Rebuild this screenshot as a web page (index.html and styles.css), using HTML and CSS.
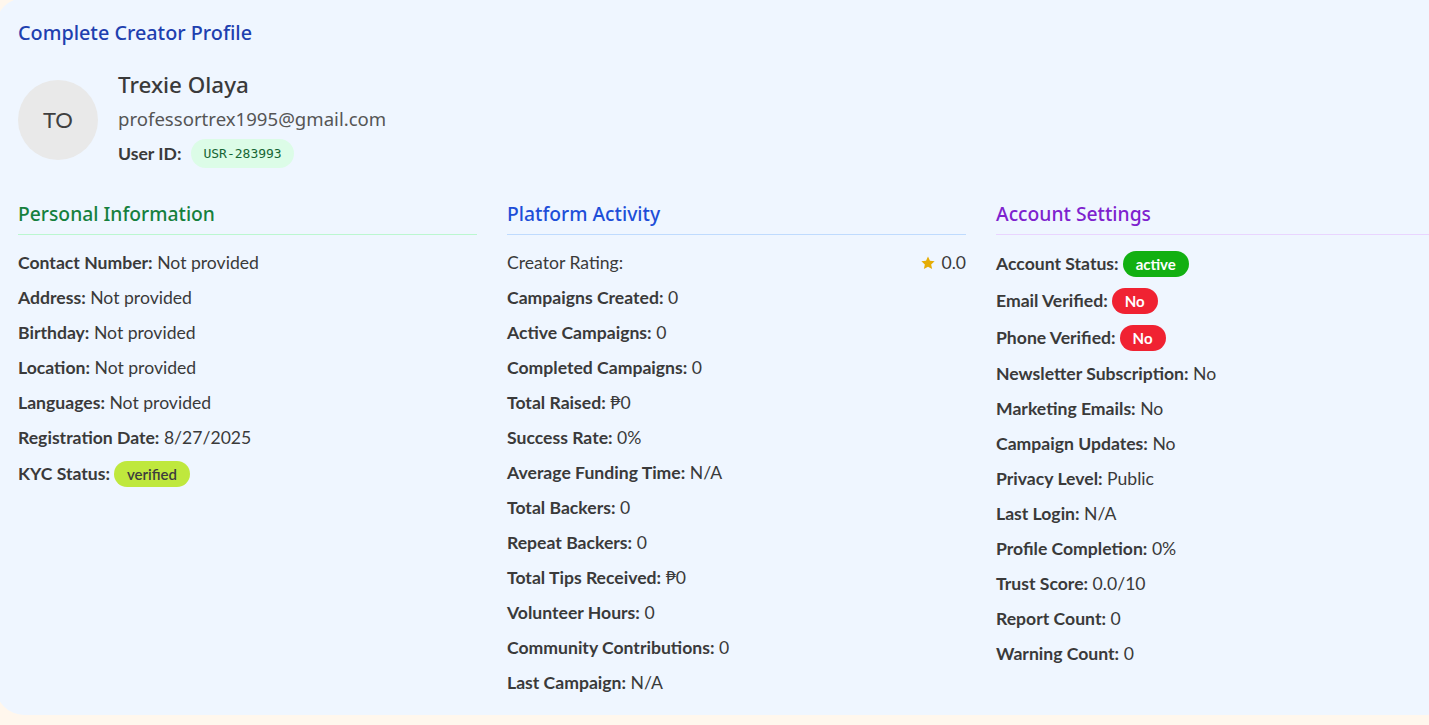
FILE: index.html
```html
<!DOCTYPE html>
<html lang="en">
<head>
<meta charset="utf-8">
<title>Complete Creator Profile</title>
<link rel="stylesheet" href="styles.css">
</head>
<body>
<div class="card">
  <h2 class="title">Complete Creator Profile</h2>
  <div class="profile">
    <div class="avatar">TO</div>
    <div class="info">
      <div class="name">Trexie Olaya</div>
      <div class="email">professortrex1995@gmail.com</div>
      <div class="userid"><span class="lbl">User ID:</span><span class="id-badge">USR-283993</span></div>
    </div>
  </div>
  <div class="columns">
    <section class="col">
      <h3 class="sec-title green">Personal Information</h3>
      <div class="rows">
        <div class="row"><b>Contact Number:</b>&nbsp;Not provided</div>
        <div class="row"><b>Address:</b>&nbsp;Not provided</div>
        <div class="row"><b>Birthday:</b>&nbsp;Not provided</div>
        <div class="row"><b>Location:</b>&nbsp;Not provided</div>
        <div class="row"><b>Languages:</b>&nbsp;Not provided</div>
        <div class="row"><b>Registration Date:</b>&nbsp;8/27/2025</div>
        <div class="row"><b>KYC Status:</b><span class="badge lime">verified</span></div>
      </div>
    </section>
    <section class="col">
      <h3 class="sec-title blue">Platform Activity</h3>
      <div class="rows">
        <div class="row between"><span>Creator Rating:</span><span class="rating"><svg class="star" viewBox="0 0 24 24" width="16" height="16"><path d="M12 2.2l2.95 6.4 7 .75-5.22 4.75 1.47 6.9L12 17.5 5.8 21l1.47-6.9L2.05 9.35l7-.75z" fill="#e5ad06"/></svg>0.0</span></div>
        <div class="row"><b>Campaigns Created:</b>&nbsp;0</div>
        <div class="row"><b>Active Campaigns:</b>&nbsp;0</div>
        <div class="row"><b>Completed Campaigns:</b>&nbsp;0</div>
        <div class="row"><b>Total Raised:</b>&nbsp;₱0</div>
        <div class="row"><b>Success Rate:</b>&nbsp;0%</div>
        <div class="row"><b>Average Funding Time:</b>&nbsp;N/A</div>
        <div class="row"><b>Total Backers:</b>&nbsp;0</div>
        <div class="row"><b>Repeat Backers:</b>&nbsp;0</div>
        <div class="row"><b>Total Tips Received:</b>&nbsp;₱0</div>
        <div class="row"><b>Volunteer Hours:</b>&nbsp;0</div>
        <div class="row"><b>Community Contributions:</b>&nbsp;0</div>
        <div class="row"><b>Last Campaign:</b>&nbsp;N/A</div>
      </div>
    </section>
    <section class="col">
      <h3 class="sec-title purple">Account Settings</h3>
      <div class="rows">
        <div class="row"><b>Account Status:</b><span class="badge green-b">active</span></div>
        <div class="row"><b>Email Verified:</b><span class="badge red">No</span></div>
        <div class="row"><b>Phone Verified:</b><span class="badge red">No</span></div>
        <div class="row"><b>Newsletter Subscription:</b>&nbsp;No</div>
        <div class="row"><b>Marketing Emails:</b>&nbsp;No</div>
        <div class="row"><b>Campaign Updates:</b>&nbsp;No</div>
        <div class="row"><b>Privacy Level:</b>&nbsp;Public</div>
        <div class="row"><b>Last Login:</b>&nbsp;N/A</div>
        <div class="row"><b>Profile Completion:</b>&nbsp;0%</div>
        <div class="row"><b>Trust Score:</b>&nbsp;0.0/10</div>
        <div class="row"><b>Report Count:</b>&nbsp;0</div>
        <div class="row"><b>Warning Count:</b>&nbsp;0</div>
      </div>
    </section>
  </div>
</div>
</body>
</html>
```

FILE: styles.css
```css
html, body {
  margin: 0;
  padding: 0;
  background: #fff7ed;
  overflow: hidden;
  height: 725px;
}
body {
  font-family: "Lato", "Liberation Sans", sans-serif;
  color: #3a3a3a;
}
.card {
  background: #eff6ff;
  margin: -2px 0 0 -4px;
  width: 1485px;
  box-sizing: border-box;
  padding: 21px 24px 20px 22px;
  border-radius: 28px;
}
.title {
  margin: 0;
  font-family: "Noto Sans", "Lato", sans-serif;
  font-weight: 500;
  font-size: 19.8px;
  line-height: 28px;
  color: #1e40af;
}
.profile {
  display: flex;
  align-items: center;
  gap: 20px;
  margin-top: 24px;
}
.avatar {
  width: 80px;
  height: 80px;
  border-radius: 50%;
  background: #e9e9e9;
  display: flex;
  align-items: center;
  justify-content: center;
  font-size: 22px;
  color: #3f3f3f;
  font-family: "Lato", sans-serif;
}
.info {
  display: flex;
  flex-direction: column;
  gap: 6px;
}
.name {
  font-family: "Noto Sans", "Lato", sans-serif;
  font-size: 22.4px;
  font-weight: 500;
  line-height: 28px;
  color: #3a3a3a;
}
.email {
  font-family: "Noto Sans", "Lato", sans-serif;
  font-size: 18.6px;
  line-height: 28px;
  color: #555;
}
.userid {
  display: flex;
  align-items: center;
  gap: 10px;
  height: 29px;
}
.lbl {
  font-weight: 700;
  font-size: 17.6px;
}
.id-badge {
  background: #dcfce7;
  color: #166534;
  font-family: "DejaVu Sans Mono", "Liberation Mono", monospace;
  font-size: 13px;
  padding: 0 12px;
  height: 29px;
  line-height: 29px;
  border-radius: 15px;
}
.columns {
  display: grid;
  grid-template-columns: 459px 459px 459px;
  column-gap: 30px;
  margin-top: 32px;
}
.sec-title {
  margin: 0;
  font-family: "Noto Sans", "Lato", sans-serif;
  font-weight: 500;
  font-size: 19.3px;
  line-height: 28px;
  padding-bottom: 6px;
  border-bottom: 1px solid;
}
.green { color: #15803d; border-color: #bbf7d0; }
.blue { color: #1d4ed8; border-color: #bfdbfe; }
.purple { color: #7e22ce; border-color: #e9d5ff; }
.rows {
  display: flex;
  flex-direction: column;
  gap: 11px;
  margin-top: 16px;
}
.row {
  display: flex;
  align-items: center;
  font-size: 17.6px;
  line-height: 24px;
  min-height: 24px;
  white-space: nowrap;
}
.row b {
  font-weight: 700;
}
.between {
  justify-content: space-between;
}
.rating {
  display: flex;
  align-items: center;
  gap: 5px;
}
.badge {
  display: inline-flex;
  align-items: center;
  height: 26px;
  padding: 0 13px;
  border-radius: 13px;
  font-size: 15px;
  font-weight: 700;
  margin-left: 4px;
}
.lime {
  background: #bfe83d;
  color: #3d3d3d;
  font-weight: 600;
}
.green-b { background: #12b012; color: #fff; }
.red { background: #f02232; color: #fff; }
```
